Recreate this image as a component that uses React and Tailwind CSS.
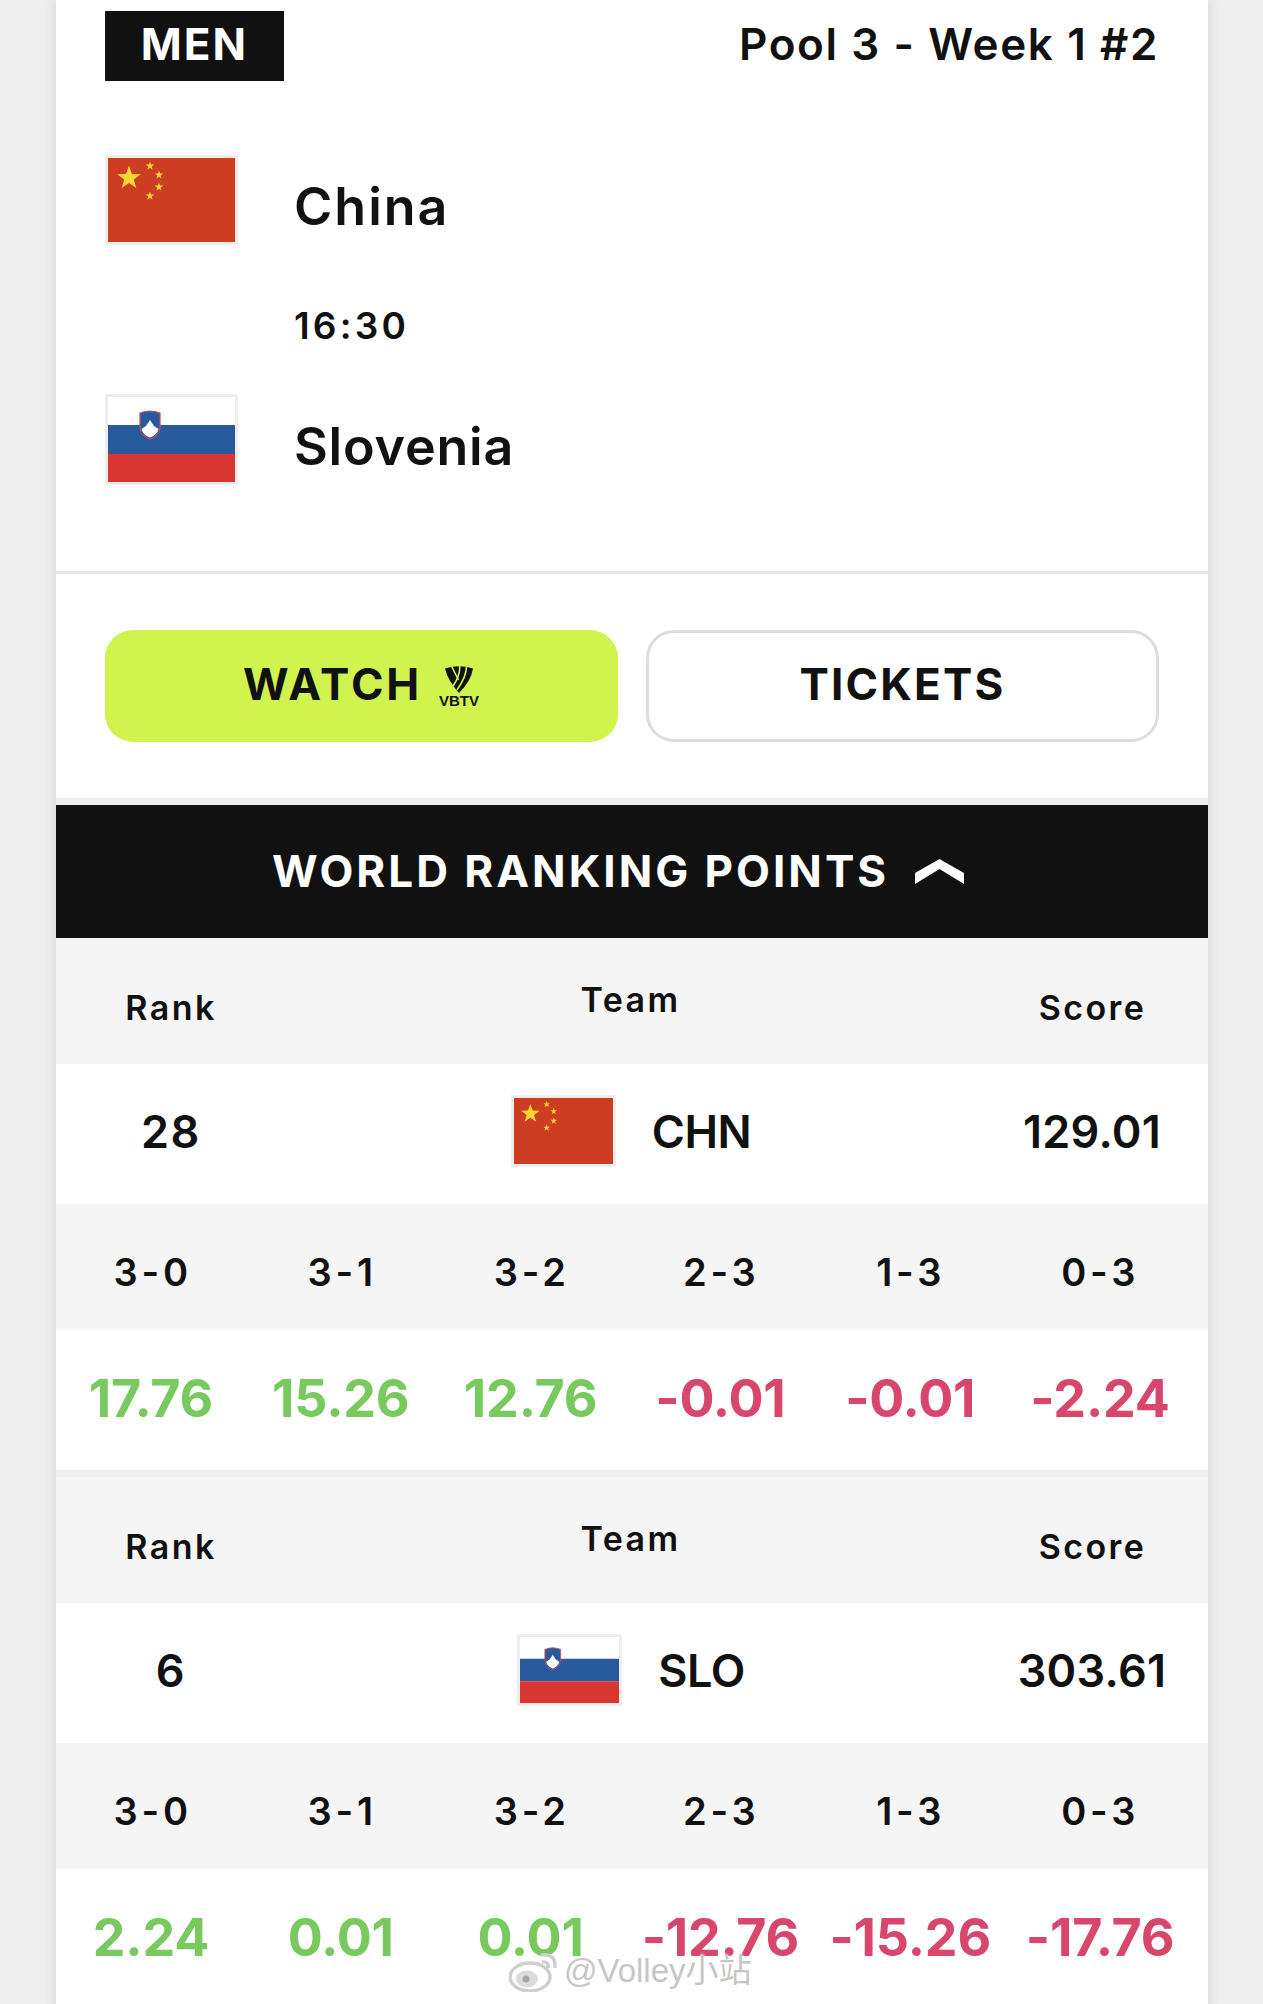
const ChinaFlag = () => {
  const star = (cx, cy, r) => {
    const pts = [];
    for (let i = 0; i < 10; i++) {
      const rad = i % 2 === 0 ? r : r * 0.4;
      const a = (Math.PI / 5) * i - Math.PI / 2;
      pts.push(`${cx + rad * Math.cos(a)},${cy + rad * Math.sin(a)}`);
    }
    return pts.join(" ");
  };
  return (
    <svg viewBox="0 0 127 84" preserveAspectRatio="none" className="block h-full w-full">
      <rect width="127" height="84" fill="#cc3d22" />
      <polygon points={star(21, 20, 12.5)} fill="#fbd733" />
      <polygon points={star(42, 8, 4.5)} fill="#fbd733" />
      <polygon points={star(51, 17, 4.5)} fill="#fbd733" />
      <polygon points={star(51, 29, 4.5)} fill="#fbd733" />
      <polygon points={star(42, 38, 4.5)} fill="#fbd733" />
    </svg>
  );
};

const SloveniaFlag = () => (
  <svg viewBox="0 0 127 85" preserveAspectRatio="none" className="block h-full w-full">
    <rect width="127" height="28" fill="#fff" />
    <rect y="28" width="127" height="29" fill="#285a9e" />
    <rect y="57" width="127" height="28" fill="#d93632" />
    <path d="M32 16 Q42 12 52 16 L52 31 Q51 39 42 42 Q33 39 32 31 Z" fill="#285a9e" stroke="#c94a63" strokeWidth="1.2" />
    <path d="M33.5 32 L38 29 L42 23 L46 29 L50.5 32 Q49 38 42 40.5 Q35 38 33.5 32 Z" fill="#fff" />
  </svg>
);

const Flag = ({ children, className }) => (
  <div className={`shrink-0 border-[3px] border-[#eeeeee] ${className}`}>{children}</div>
);

const VbtvLogo = () => (
  <div className="flex w-[42px] flex-col items-center">
    <svg viewBox="0 0 28 28" className="h-[28px] w-[28px]">
      <path d="M0 3.5 Q14 -1 28 3.5 Q26 16 14 28 Q3 16 0 3.5 Z" fill="#111111" />
      <path d="M6.5 1 L13.5 15" stroke="#d0f34e" strokeWidth="1.6" />
      <path d="M14.5 0 Q16 9 8 21" stroke="#d0f34e" strokeWidth="1.6" fill="none" />
      <path d="M21.5 0 Q22 11 12 25" stroke="#d0f34e" strokeWidth="1.6" fill="none" />
    </svg>
    <span className="mt-[2px] text-[15px] leading-[12px] font-bold tracking-normal font-['Liberation_Sans',sans-serif]">VBTV</span>
  </div>
);

const scoreLabels = ["3-0", "3-1", "3-2", "2-3", "1-3", "0-3"];

const RankingBlock = ({ rank, flag, code, score, values }) => (
  <div>
    <div className="grid h-[126px] grid-cols-[228px_1fr_232px] items-center bg-[#f5f5f5] text-center text-[34px] font-semibold tracking-[2.4px]">
      <div className="pt-3 pl-[2px]">Rank</div>
      <div className="pb-[3px] pl-[1px]">Team</div>
      <div className="pt-3 pl-[1px]">Score</div>
    </div>
    <div className="grid h-[140px] grid-cols-[228px_1fr_232px] items-center bg-white pb-[6px] text-center text-[45px] font-semibold">
      <div className="pt-[2px] pl-[2px] tracking-[1.5px]">{rank}</div>
      <div className="flex items-center justify-center gap-[36px] pl-[2px] tracking-[-0.5px]">
        <Flag className="h-[72px] w-[105px]">{flag}</Flag>
        <span className="pt-[2px]">{code}</span>
      </div>
      <div className="pt-[2px] tracking-[0.3px]">{score}</div>
    </div>
    <div className="grid h-[126px] grid-cols-6 items-center bg-[#f5f5f5] pt-[10px] pr-[13px] pl-[2px] text-center text-[38px] font-semibold tracking-[3.8px]">
      {scoreLabels.map((label) => (
        <div key={label}>{label}</div>
      ))}
    </div>
    <div className="grid h-[140px] grid-cols-6 items-center bg-white pr-[13px] pb-[2px] text-center text-[52px] font-bold tracking-[-0.2px]">
      {values.map((v, i) => (
        <div key={i} className={v.startsWith("-") ? "text-[#d9466b]" : "text-[#78c95e]"}>
          {v}
        </div>
      ))}
    </div>
  </div>
);

export default function App() {
  return (
    <div className="relative h-[2004px] overflow-hidden bg-[#eeeeee] font-['Inter',sans-serif] text-[#111111]">
      <div className="ml-[56px] w-[1152px] bg-white shadow-[0_0_12px_rgba(0,0,0,0.12)]">
        <div className="pt-[11px] pl-[49px] pr-[49px]">
          <div className="flex h-[70px] items-center justify-between">
            <div className="flex h-[70px] w-[179px] items-center justify-center bg-[#111111] pb-[4px] text-[44px] font-bold tracking-[2px] text-white">
              MEN
            </div>
            <div className="pb-[5px] text-[44px] leading-[60px] font-semibold tracking-[1.6px]">Pool 3 - Week 1 #2</div>
          </div>

          <div className="mt-[74px] flex h-[90px] items-center gap-[56px]">
            <Flag className="h-[90px] w-[133px]">
              <ChinaFlag />
            </Flag>
            <div className="pt-[14px] text-[52px] leading-[60px] font-semibold tracking-[2px]">China</div>
          </div>
          <div className="mt-[61px] h-[40px] pl-[189px] text-[37px] leading-[40px] font-semibold tracking-[3.2px]">16:30</div>
          <div className="mt-[48px] flex h-[91px] items-center gap-[56px]">
            <Flag className="h-[91px] w-[133px]">
              <SloveniaFlag />
            </Flag>
            <div className="pt-[14px] text-[52px] leading-[60px] font-semibold tracking-[0.8px]">Slovenia</div>
          </div>
        </div>

        <div className="mt-[86px] border-t-[3px] border-[#e3e3e3]" />

        <div className="flex gap-[28px] pt-[56px] pb-[56px] pl-[49px]">
          <div className="flex h-[112px] w-[513px] items-center justify-center gap-[16px] rounded-[28px] bg-[#d0f34e] text-[44px] font-bold tracking-[2.8px]">
            <span className="pb-[4px]">WATCH</span>
            <VbtvLogo />
          </div>
          <div className="flex h-[112px] w-[513px] items-center justify-center rounded-[28px] border-[3px] border-[#dddddd] pb-[4px] text-[44px] font-bold tracking-[2.2px]">
            TICKETS
          </div>
        </div>

        <div className="h-[7px] bg-[#eeeeee]" />

        <div className="flex h-[133px] items-center justify-center gap-[26px] bg-[#111111] pr-[28px] text-[44px] font-bold tracking-[3px] text-white">
          <span className="pb-[2px]">WORLD RANKING POINTS</span>
          <svg viewBox="0 0 49 25" className="h-[25px] w-[49px]">
            <polygon points="0,14 24.5,0 49,14 49,25 24.5,10 0,25" fill="#fff" />
          </svg>
        </div>

        <RankingBlock
          rank="28"
          flag={<ChinaFlag />}
          code="CHN"
          score="129.01"
          values={["17.76", "15.26", "12.76", "-0.01", "-0.01", "-2.24"]}
        />
        <div className="h-[7px] bg-[#eeeeee]" />
        <RankingBlock
          rank="6"
          flag={<SloveniaFlag />}
          code="SLO"
          score="303.61"
          values={["2.24", "0.01", "0.01", "-12.76", "-15.26", "-17.76"]}
        />
      </div>

      {/* weibo watermark */}
      <div className="absolute top-[1950px] left-[509px] flex items-center gap-[5px] font-['Liberation_Sans','Noto_Sans_CJK_SC',sans-serif] text-[33px] leading-[40px] text-[#c6c6c6] [text-shadow:0_0_3px_#ffffff,0_1px_2px_#ffffff]">
        <svg viewBox="0 0 50 42" className="h-[42px] w-[50px]">
          <ellipse cx="21" cy="27" rx="20" ry="14" fill="#ffffff" stroke="#cfcfcf" strokeWidth="3.5" />
          <ellipse cx="18" cy="29" rx="11" ry="8.5" fill="#dcdcdc" />
          <circle cx="17" cy="29" r="3.5" fill="#a5a5a5" />
          <path d="M32 5 Q47 3 46 18" fill="none" stroke="#cfcfcf" strokeWidth="3.5" />
          <path d="M33 12 Q40 11 39 18" fill="none" stroke="#cfcfcf" strokeWidth="3.5" />
        </svg>
        <span>@Volley小站</span>
      </div>
    </div>
  );
}
